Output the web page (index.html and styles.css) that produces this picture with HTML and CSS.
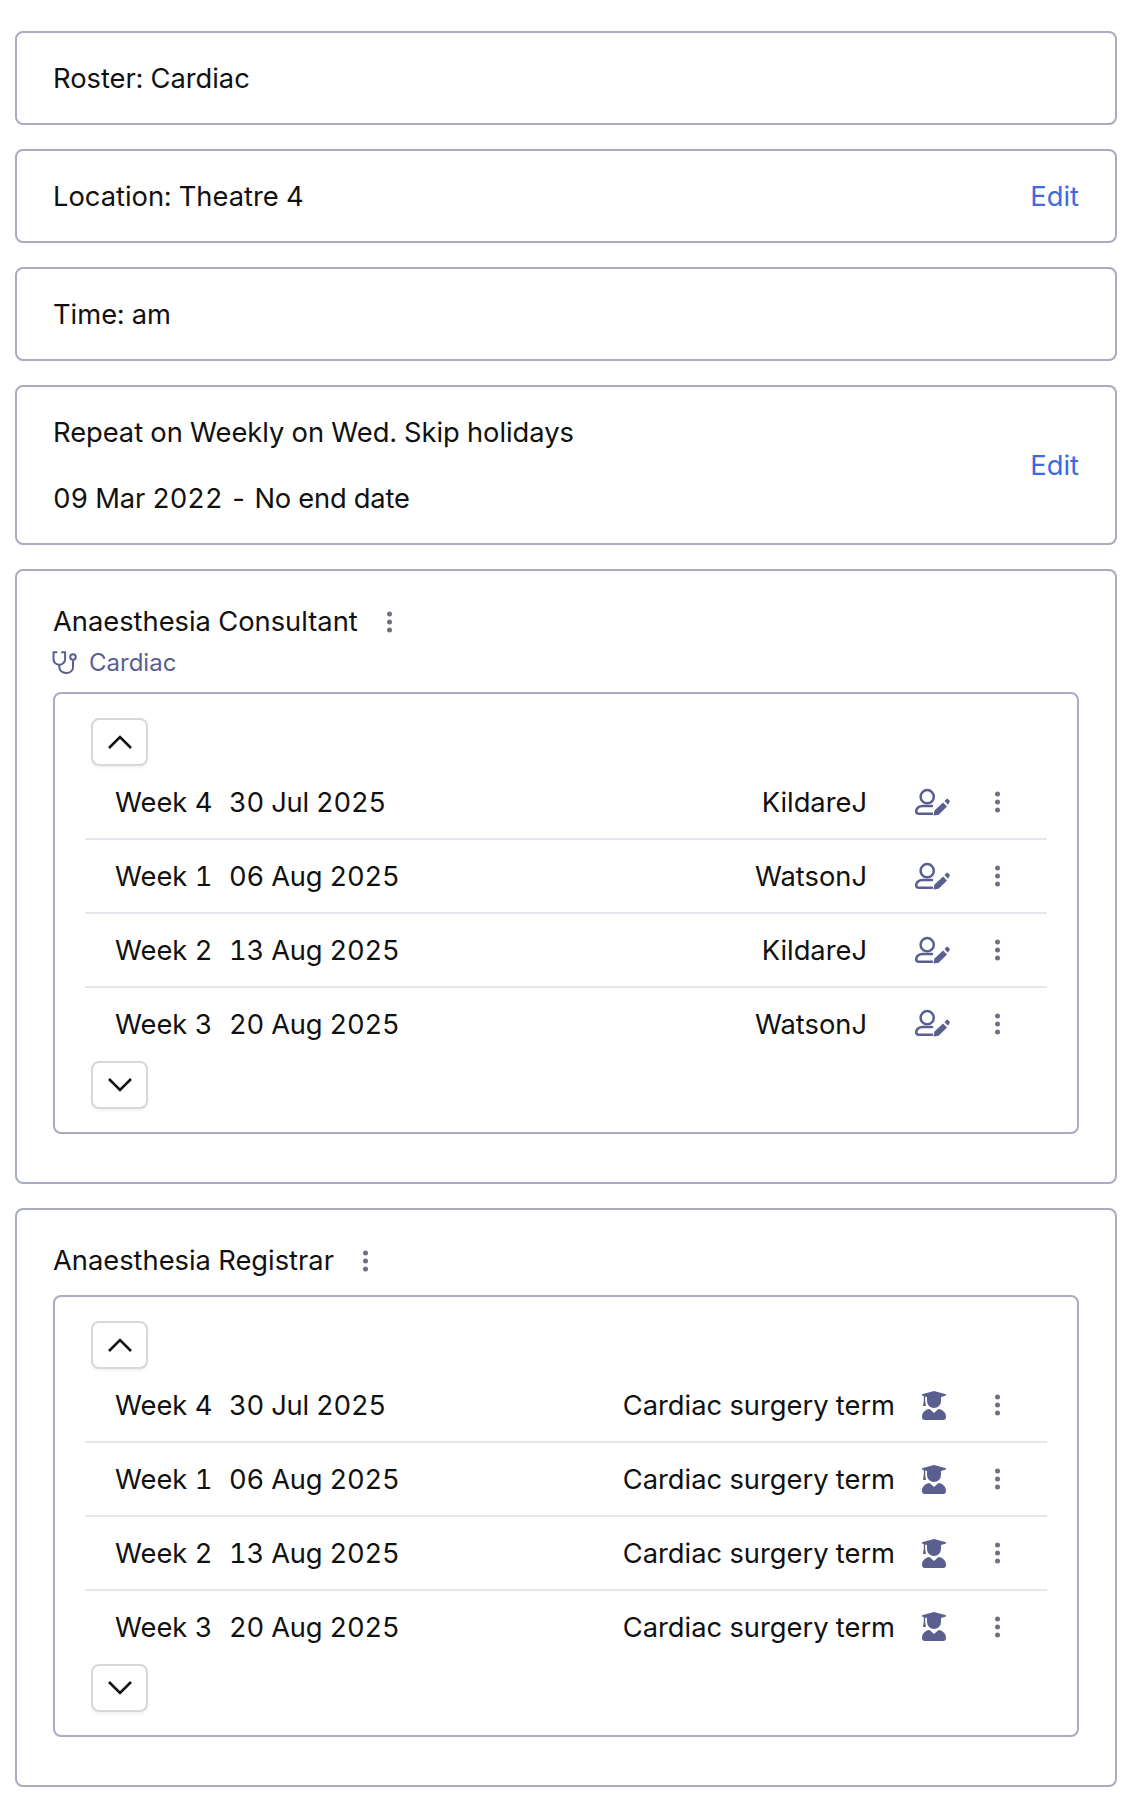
FILE: index.html
```html
<!DOCTYPE html>
<html lang="en">
<head>
<meta charset="utf-8">
<title>Roster</title>
<link rel="stylesheet" href="styles.css">
</head>
<body>
<svg class="defs" width="0" height="0" aria-hidden="true">
  <symbol id="kebab" viewBox="0 0 6 24"><circle cx="3" cy="4" r="2.5"/><circle cx="3" cy="12" r="2.5"/><circle cx="3" cy="20" r="2.5"/></symbol>
  <symbol id="up" viewBox="0 0 26 16"><path d="M2 14 13 3l11 11" fill="none" stroke="#111" stroke-width="2.6"/></symbol>
  <symbol id="down" viewBox="0 0 26 16"><path d="M2 2l11 11L24 2" fill="none" stroke="#111" stroke-width="2.6"/></symbol>
  <symbol id="useredit" viewBox="0 0 35 29"><circle cx="12.2" cy="8.7" r="6.6" fill="none" stroke="#5a5f8f" stroke-width="2.5"/><path d="M17 25.800H4c-1.800 0-2.800-1-2.800-2.600 0-3 3-5.300 6-5.300H17" fill="none" stroke="#5a5f8f" stroke-width="2.5" stroke-linecap="round"/><path d="M18.500 27.500l1-5L28 14.500l4 4-8.300 8.200z" fill="#5a5f8f"/><path d="M29.500 13l1.800-1.800c.6-.6 1.300-.6 1.900 0l1.200 1.200c.6.6.6 1.300 0 1.900L33 16.800z" fill="#5a5f8f"/></symbol>
  <symbol id="grad" viewBox="0 0 24 29"><path d="M12 0 0 3.200v1.300l1.800.5v4.500L1 15h3l-.8-5V5.400L5 5.900V10a7 7 0 0 0 14 0V5.900l5-1.400V3.200z" fill="#5a5f8f"/><path d="M7.500 18 12 22l4.500-4c3.900.3 7.500 3.400 7.500 8 0 1.800-1 3-2.800 3H2.800C1 29 0 27.800 0 26c0-4.600 3.600-7.700 7.500-8z" fill="#5a5f8f"/></symbol>
  <symbol id="steth" viewBox="0 0 26 24"><path d="M4.500 1.200H1.500V8a5.800 5.800 0 0 0 11.600 0V1.200H10" fill="none" stroke="#5a5f8f" stroke-width="2" stroke-linecap="round" stroke-linejoin="round"/><path d="M7.300 14v2.200c0 3.300 2.900 5.800 6.900 5.800s6.800-2.500 6.800-5.800V9.200" fill="none" stroke="#5a5f8f" stroke-width="2"/><circle cx="21" cy="6" r="2.800" fill="none" stroke="#5a5f8f" stroke-width="2"/></symbol>
</svg>
<main class="page">
  <section class="card row-card"><span>Roster: Cardiac</span></section>
  <section class="card row-card"><span>Location: Theatre 4</span><a class="edit">Edit</a></section>
  <section class="card row-card"><span>Time: am</span></section>
  <section class="card row-card repeat">
    <div class="repeat-text"><p class="tight">Repeat on Weekly on Wed. Skip holidays</p><p class="dates">09 Mar 2022 - No end date</p></div>
    <a class="edit">Edit</a>
  </section>

  <section class="card group">
    <h2 class="group-title">Anaesthesia Consultant <svg class="kebab"><use href="#kebab"/></svg></h2>
    <div class="tag"><svg class="steth"><use href="#steth"/></svg><span>Cardiac</span></div>
    <div class="panel">
      <button class="nav"><svg><use href="#up"/></svg></button>
      <div class="rows">
        <div class="entry"><span class="wk">Week 4</span><span class="date">30 Jul 2025</span><span class="who">KildareJ</span><svg class="ic-user"><use href="#useredit"/></svg><svg class="kebab"><use href="#kebab"/></svg></div>
        <div class="entry"><span class="wk">Week 1</span><span class="date">06 Aug 2025</span><span class="who">WatsonJ</span><svg class="ic-user"><use href="#useredit"/></svg><svg class="kebab"><use href="#kebab"/></svg></div>
        <div class="entry"><span class="wk">Week 2</span><span class="date">13 Aug 2025</span><span class="who">KildareJ</span><svg class="ic-user"><use href="#useredit"/></svg><svg class="kebab"><use href="#kebab"/></svg></div>
        <div class="entry"><span class="wk">Week 3</span><span class="date">20 Aug 2025</span><span class="who">WatsonJ</span><svg class="ic-user"><use href="#useredit"/></svg><svg class="kebab"><use href="#kebab"/></svg></div>
      </div>
      <button class="nav"><svg><use href="#down"/></svg></button>
    </div>
  </section>

  <section class="card group">
    <h2 class="group-title">Anaesthesia Registrar <svg class="kebab"><use href="#kebab"/></svg></h2>
    <div class="panel">
      <button class="nav"><svg><use href="#up"/></svg></button>
      <div class="rows">
        <div class="entry"><span class="wk">Week 4</span><span class="date">30 Jul 2025</span><span class="who">Cardiac surgery term</span><svg class="ic-grad"><use href="#grad"/></svg><svg class="kebab"><use href="#kebab"/></svg></div>
        <div class="entry"><span class="wk">Week 1</span><span class="date">06 Aug 2025</span><span class="who">Cardiac surgery term</span><svg class="ic-grad"><use href="#grad"/></svg><svg class="kebab"><use href="#kebab"/></svg></div>
        <div class="entry"><span class="wk">Week 2</span><span class="date">13 Aug 2025</span><span class="who">Cardiac surgery term</span><svg class="ic-grad"><use href="#grad"/></svg><svg class="kebab"><use href="#kebab"/></svg></div>
        <div class="entry"><span class="wk">Week 3</span><span class="date">20 Aug 2025</span><span class="who">Cardiac surgery term</span><svg class="ic-grad"><use href="#grad"/></svg><svg class="kebab"><use href="#kebab"/></svg></div>
      </div>
      <button class="nav"><svg><use href="#down"/></svg></button>
    </div>
  </section>
</main>
</body>
</html>
```
FILE: styles.css
```css
* { box-sizing: border-box; }
html, body { margin: 0; background: #fff; }
body { font-family: Inter, "Liberation Sans", sans-serif; font-size: 27.300px; line-height: 40px; color: #111; font-variant-numeric: tabular-nums; }
.defs { position: absolute; }
.page { display: flex; flex-direction: column; gap: 24px; padding: 31px 13px 8px 15px; }
.card { border: 2px solid #a9abc1; border-radius: 8px; background: #fff; }
.row-card { height: 94px; display: flex; align-items: center; justify-content: space-between; padding: 2px 36px 0; }
.repeat { height: 160px; }
.repeat p { margin: 0; }
.repeat p + p { margin-top: 26px; }
.repeat .tight { letter-spacing: -0.03px; }
.repeat .dates { letter-spacing: -0.15px; }
.edit { color: #3e6ae1; }
.group { padding: 29px 36px 48px; }
.group-title { margin: 0; font: inherit; display: flex; align-items: center; gap: 28px; height: 42px; padding-top: 2px; }
.kebab { width: 7px; height: 24px; fill: #6e7288; flex: none; }
.tag { display: flex; align-items: center; gap: 11px; color: #5a5f8f; font-size: 24px; height: 40px; margin: 1px 0 0 -1px; }
.steth { width: 26px; height: 24px; }
.panel { margin-top: 9px; border: 2px solid #a9abc1; border-radius: 8px; padding: 24px 30px 23px 36px; }
.group-title + .panel { margin-top: 14px; }
.nav { display: flex; align-items: center; justify-content: center; width: 57px; height: 48px; padding: 0; background: #fff; border: 2px solid #d8d8dc; border-radius: 8px; box-shadow: 0 2px 3px rgba(0,0,0,.05); }
.nav svg { width: 26px; height: 16px; }
.rows { margin: 0 0 0 -6px; }
.entry { display: flex; align-items: center; height: 74px; padding: 0 46px 0 30px; border-bottom: 2px solid #e6e6ec; }
.entry:last-child { border-bottom-color: transparent; height: 73px; }
.wk, .date, .who { padding-top: 2px; }
.wk { width: 114px; }
.date { letter-spacing: -0.2px; }
.who { margin-left: auto; }
.ic-user { width: 35px; height: 29px; margin: 0 0 0 48px; flex: none; }
.ic-grad { width: 24px; height: 29px; margin: 0 0 0 27px; flex: none; }
.entry .kebab { margin-left: 44px; }
.entry .ic-grad + .kebab { margin-left: 48px; }
```
